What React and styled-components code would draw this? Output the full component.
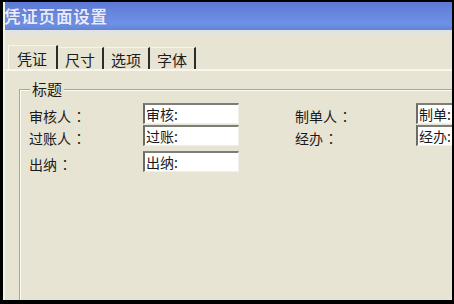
import styled, {createGlobalStyle} from "styled-components";

const GlobalStyle = createGlobalStyle`
    html, body {
        margin: 0;
        padding: 0;
        background: #000;
    }
`;

const tabs = ["凭证", "尺寸", "选项", "字体"];

const leftRows = [
    {label: "审核人", value: "审核:"},
    {label: "过账人", value: "过账:"},
    {label: "出纳", value: "出纳:"},
];

const rightRows = [
    {label: "制单人", value: "制单:"},
    {label: "经办", value: "经办:"},
];

export default function App() {
    return (
        <>
            <GlobalStyle/>
            <Frame>
                <Window>
                    <TitleBar>凭证页面设置</TitleBar>
                    <Body>
                        <TabStrip>
                            {tabs.map((t, i) => (
                                <Tab key={t} $active={i === 0}>{t}</Tab>
                            ))}
                        </TabStrip>
                        <TabPanel>
                            <GroupBox>
                                <Caption>标题</Caption>
                                <FieldGrid>
                                    {leftRows.map((r, i) => (
                                        <Row key={r.label} $row={i + 1} $col={1}>
                                            <Label>{r.label}<Colon>：</Colon></Label>
                                            <Field>{r.value}</Field>
                                        </Row>
                                    ))}
                                    {rightRows.map((r, i) => (
                                        <Row key={r.label} $row={i + 1} $col={2}>
                                            <Label>{r.label}<Colon>：</Colon></Label>
                                            <Field>{r.value}</Field>
                                        </Row>
                                    ))}
                                </FieldGrid>
                            </GroupBox>
                        </TabPanel>
                    </Body>
                </Window>
            </Frame>
        </>
    );
}

const Frame = styled.div`
    width: 454px;
    height: 304px;
    box-sizing: border-box;
    padding: 2px 2px 4px 3px;
    background: #000;
    font-family: "Noto Sans CJK SC", "DejaVu Sans", sans-serif;
`;

const Window = styled.div`
    height: 100%;
    display: flex;
    flex-direction: column;
    overflow: hidden;
    background: #e8e4d3;
    border-left: 2px solid #f3f1e8;
    box-sizing: border-box;
`;

const TitleBar = styled.div`
    height: 28px;
    flex-shrink: 0;
    display: flex;
    align-items: center;
    margin-left: -2px;
    padding-left: 1px;
    background: linear-gradient(#5c79d4 0%, #6888df 45%, #6e91e5 80%, #6182d5 100%);
    color: #e6ebfd;
    font-size: 16.5px;
    font-weight: 700;
    letter-spacing: 0.8px;
    text-shadow: 0 0 1px rgba(40, 60, 140, 0.6);
`;

const Body = styled.div`
    flex: 1;
    display: flex;
    flex-direction: column;
    border-top: 3px solid #dfe3e4;
    min-height: 0;
`;

const TabStrip = styled.div`
    display: flex;
    align-items: flex-end;
    padding: 12px 0 0 3px;
    height: 24px;
`;

const Tab = styled.div`
    box-sizing: border-box;
    height: ${p => (p.$active ? "24px" : "22px")};
    display: flex;
    align-items: center;
    padding: ${p => (p.$active ? "2px 9px 0 8px" : "2px 7px 0 6px")};
    font-size: 15px;
    color: #1c1c1c;
    border-top: 1px solid #f6f4ea;
    border-left: ${p => (p.$active ? "1px solid #f8f6ee" : "none")};
    border-right: 2px solid #2a2a2a;
    margin-right: 1px;
`;

const TabPanel = styled.div`
    flex: 1;
    display: flex;
    flex-direction: column;
    border-top: 2px solid #f7f5ec;
    min-height: 0;
`;

const GroupBox = styled.div`
    position: relative;
    margin: 18px 0 0 14px;
    width: 600px;
    height: 400px;
    flex-shrink: 0;
    border-top: 1px solid #aaa795;
    border-left: 1px solid #aaa795;
    box-shadow: inset 1px 1px 0 #fbfaf3;
`;

const Caption = styled.span`
    position: absolute;
    top: -10px;
    left: 10px;
    padding: 0 2px;
    background: #e8e4d3;
    font-size: 15px;
    line-height: 18px;
    color: #1c1c1c;
`;

const FieldGrid = styled.div`
    display: grid;
    grid-template-columns: 210px 273px;
    grid-template-rows: 22px 26px 22px;
    padding: 13px 0 0 9px;
`;

const Row = styled.div`
    grid-row: ${p => p.$row};
    grid-column: ${p => p.$col};
    display: grid;
    grid-template-columns: ${p => (p.$col === 1 ? "114px 96px" : "121px 96px")};
    margin-left: ${p => (p.$col === 2 ? "56px" : "0")};
    align-items: start;
`;

const Label = styled.span`
    height: 21px;
    display: flex;
    align-items: center;
    padding-top: 4px;
    box-sizing: border-box;
    font-size: 14px;
    color: #1a1a1a;
`;

const Colon = styled.span`
    font-family: "Noto Sans CJK TC", "Noto Sans CJK SC", sans-serif;
    margin-left: 1px;
`;

const Field = styled.div`
    box-sizing: border-box;
    height: 21px;
    display: flex;
    align-items: center;
    padding-left: 1px;
    background: #fff;
    border-top: 2px solid #7d7d7a;
    border-left: 2px solid #6b6b68;
    border-right: 1px solid #f0efe8;
    border-bottom: 1px solid #f0efe8;
    font-size: 14px;
    color: #1a1a1a;
    white-space: nowrap;
    overflow: hidden;
`;
